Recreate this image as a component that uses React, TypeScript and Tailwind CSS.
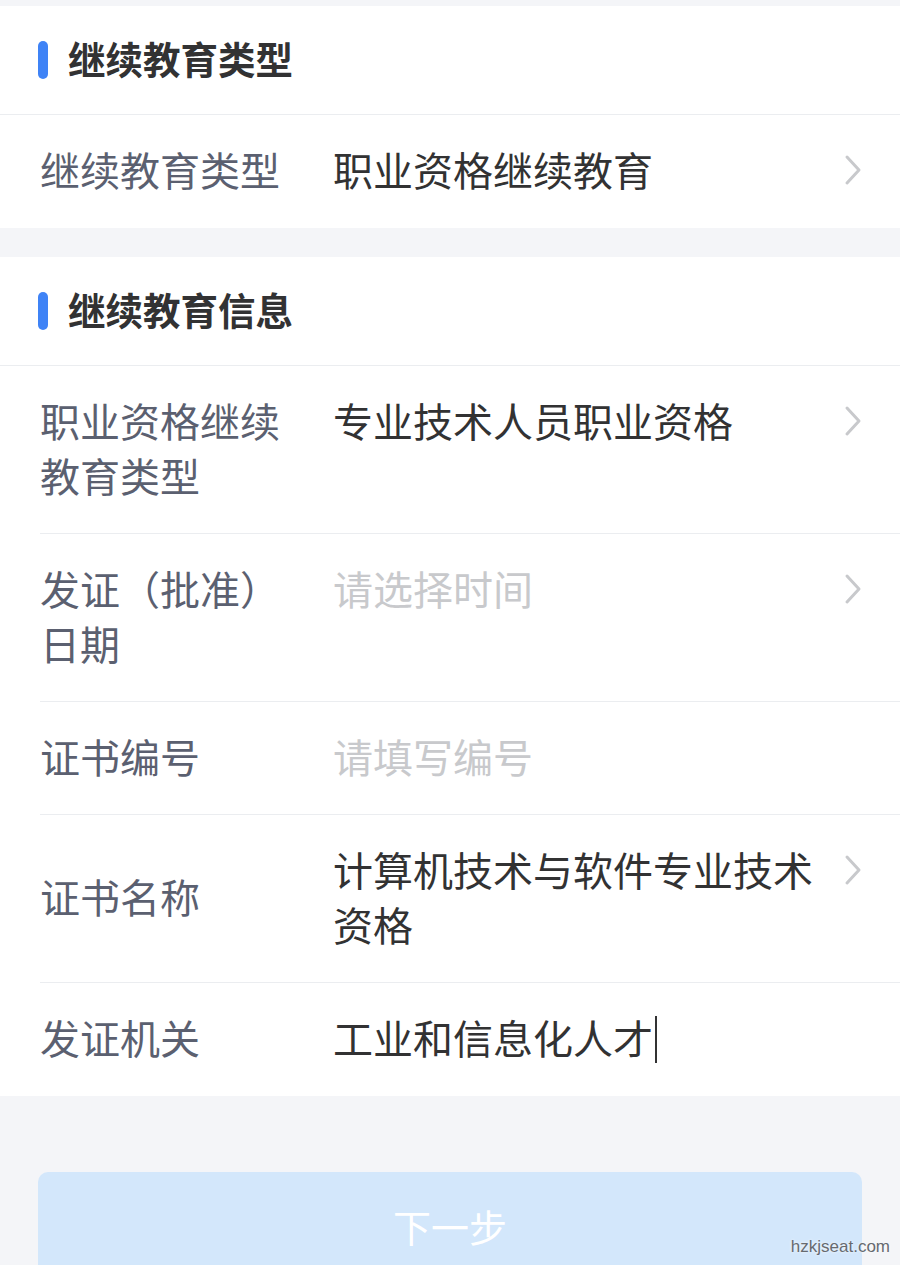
import React from 'react';

const Chevron: React.FC = () => (
  <svg width="18" height="32" viewBox="0 0 18 32" fill="none">
    <polyline points="3,3 15,16 3,29" stroke="#c8c9cc" strokeWidth="3" strokeLinecap="round" strokeLinejoin="round" />
  </svg>
);

const SectionHeader: React.FC<{ title: string }> = ({ title }) => (
  <div className="flex items-center h-[109px] border-b border-[#ebedf0] pl-[38px]">
    <div className="w-[10px] h-[38px] rounded-full bg-[#3f83f6]" />
    <span className="ml-[20px] pb-[4px] text-[37.5px] font-bold text-[#323233] leading-none">{title}</span>
  </div>
);

type RowProps = {
  label: string;
  value?: string;
  placeholder?: string;
  arrow?: boolean;
  cursor?: boolean;
  last?: boolean;
};

const Row: React.FC<RowProps> = ({ label, value, placeholder, arrow, cursor, last }) => (
  <div className="pl-[40px]">
    <div
      className={`flex items-start pt-[26.5px] pb-[30.5px] pr-[38px] border-b ${last ? 'border-transparent' : 'border-[#ebedf0]'}`}
    >
      <div className="w-[250px] mr-[43px] self-center text-[40px] leading-[55px] text-[#5b6070]">{label}</div>
      <div className="flex-1 text-[40px] leading-[55px]">
        {value ? (
          <span className="text-[#323233]">
            {value}
            {cursor && (
              <span className="relative top-[6px] inline-block w-[2px] h-[47px] bg-[#323233] align-top ml-[2px]" />
            )}
          </span>
        ) : (
          <span className="text-[#c8c9cc]">{placeholder}</span>
        )}
      </div>
      <div className="w-[30px] h-[55px] pt-[2px] flex items-center justify-end">{arrow && <Chevron />}</div>
    </div>
  </div>
);

export default function App() {
  return (
    <div
      className="relative min-h-[1265px] bg-[#f4f5f8] pt-[6px]"
      style={{ fontFamily: '"Noto Sans CJK SC", "Noto Sans", sans-serif' }}
    >
      <div className="bg-white">
        <SectionHeader title="继续教育类型" />
        <Row label="继续教育类型" value="职业资格继续教育" arrow last />
      </div>

      <div className="h-[29px]" />

      <div className="bg-white">
        <SectionHeader title="继续教育信息" />
        <Row label="职业资格继续教育类型" value="专业技术人员职业资格" arrow />
        <Row label="发证（批准）日期" placeholder="请选择时间" arrow />
        <Row label="证书编号" placeholder="请填写编号" />
        <Row label="证书名称" value="计算机技术与软件专业技术资格" arrow />
        <Row label="发证机关" value="工业和信息化人才" cursor last />
      </div>

      <div className="px-[38px] pt-[76px]">
        <button className="w-full h-[112px] pb-[6px] rounded-[10px] bg-[#d3e7fb] text-white text-[38px]">下一步</button>
      </div>

      <div
        className="absolute right-[10px] top-[1234px] text-[17px] text-[#666a70]"
        style={{ fontFamily: '"Liberation Sans Narrow", "Liberation Sans", sans-serif', textShadow: '0 0 3px #fff' }}
      >
        hzkjseat.com
      </div>
    </div>
  );
}
